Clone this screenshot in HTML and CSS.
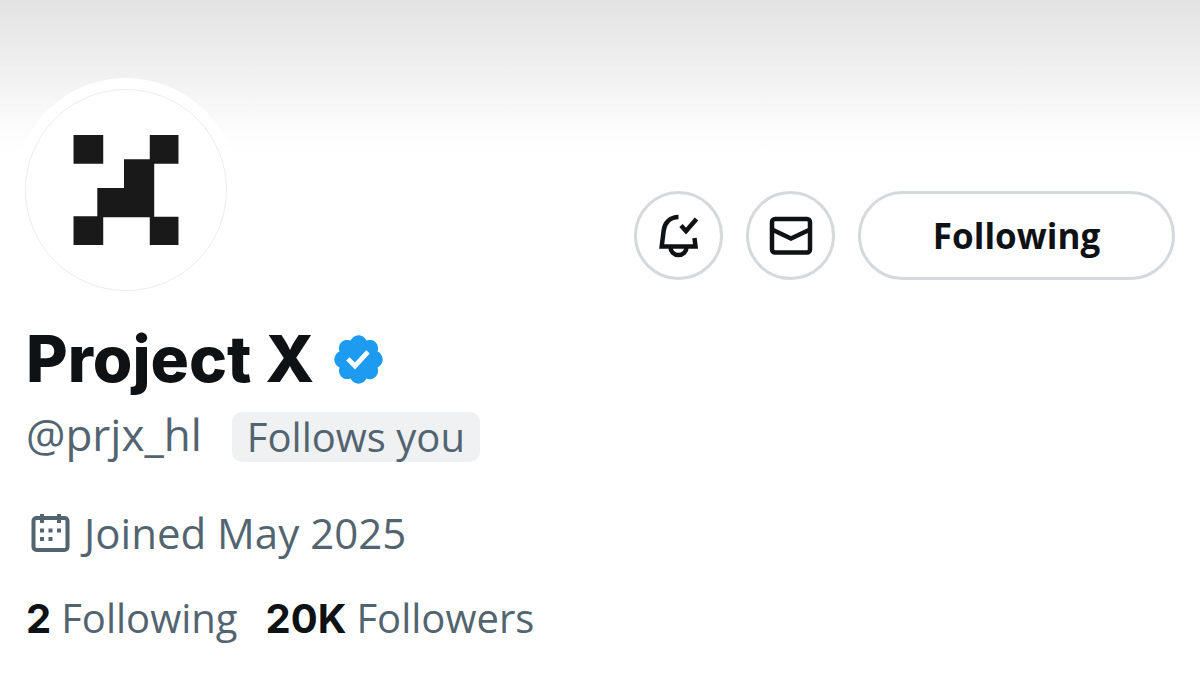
FILE: index.html
```html
<!DOCTYPE html>
<html lang="en">
<head>
<meta charset="utf-8">
<title>Project X (@prjx_hl)</title>
<link rel="stylesheet" href="styles.css">
</head>
<body>
<main class="profile">
  <header class="top">
    <div class="avatar">
      <svg class="avatar-logo" viewBox="0 0 202 202" role="img" aria-label="Project X logo">
        <path fill="#191919" d="M48 45.500h30v29h-30zM125 45.500h29v29h-24.500v53.500h24.500v28.500h-29v-28h-47v28h-30v-29h24v-28.500h27v-29h26z"/>
      </svg>
    </div>
    <div class="actions">
      <button class="btn btn-round" type="button" aria-label="Notifications">
        <svg class="btn-icon" viewBox="0 0 50 50" fill="none" stroke="#0f1214" stroke-width="4.500">
          <path d="M24.500 6C16 6 10.500 12 9.700 19.500L7.700 35.500H41.500L40.500 27"/>
          <path d="M16.500 36.500a8 7.500 0 0 0 16 0"/>
          <path d="M27 14.500L32 20L42.500 8"/>
        </svg>
      </button>
      <button class="btn btn-round" type="button" aria-label="Message">
        <svg class="btn-icon" viewBox="0 0 50 50" fill="none" stroke="#0f1214" stroke-width="4.500">
          <rect x="6" y="8" width="38" height="33.500" rx="3"/>
          <path d="M7 19L25 27.500L43 19"/>
        </svg>
      </button>
      <button class="btn btn-following" type="button">Following</button>
    </div>
  </header>

  <div class="name-row">
    <h1 class="name">Project X</h1>
    <svg class="verified" viewBox="1.500 1.500 19 19" role="img" aria-label="Verified account">
      <path fill="#1d9bf0" d="M20.396 11c-.018-.646-.215-1.275-.57-1.816-.354-.54-.852-.972-1.438-1.246.223-.607.27-1.264.14-1.897-.131-.634-.437-1.218-.882-1.687-.47-.445-1.053-.75-1.687-.882-.633-.13-1.29-.083-1.897.14-.273-.587-.704-1.086-1.245-1.44S11.647 1.62 11 1.604c-.646.017-1.273.213-1.813.568s-.969.854-1.24 1.44c-.608-.223-1.267-.272-1.902-.14-.635.13-1.22.436-1.69.882-.445.47-.749 1.055-.878 1.688-.13.633-.08 1.29.144 1.896-.587.274-1.087.705-1.443 1.245-.356.54-.555 1.17-.574 1.817.02.647.218 1.276.574 1.817.356.54.856.972 1.443 1.245-.224.606-.274 1.263-.144 1.896.13.634.433 1.218.877 1.688.47.443 1.054.747 1.687.878.633.132 1.29.084 1.897-.136.274.586.705 1.084 1.246 1.439.54.354 1.17.551 1.816.569.647-.016 1.276-.213 1.817-.567s.972-.854 1.245-1.44c.604.239 1.266.296 1.903.164.636-.132 1.22-.447 1.68-.907.46-.46.776-1.044.908-1.681s.075-1.299-.165-1.903c.586-.274 1.084-.705 1.439-1.246.354-.54.551-1.17.569-1.816zM9.662 14.850l-3.429-3.428 1.293-1.302 2.072 2.072 4.400-4.794 1.347 1.246z"/>
    </svg>
  </div>

  <div class="handle-row">
    <span class="handle">@prjx_hl</span>
    <span class="tag">Follows you</span>
  </div>

  <div class="joined">
    <svg class="calendar" viewBox="0 0 40 40" aria-hidden="true">
      <rect x="3.500" y="5" width="34" height="32" rx="3" fill="none" stroke="#536471" stroke-width="4"/>
      <path fill="#536471" d="M10 1h4v9h-4zM27 1h4v9h-4zM10 15.500h4v4h-4zM18.500 15.500h4v4h-4zM27 15.500h4v4h-4zM10 24h4v4h-4zM18.500 24h4v4h-4z"/>
    </svg>
    <span>Joined May 2025</span>
  </div>

  <nav class="stats">
    <a class="stat" href="#following"><strong>2</strong> <span>Following</span></a>
    <a class="stat" href="#followers"><strong>20K</strong> <span>Followers</span></a>
  </nav>
</main>
</body>
</html>
```
FILE: styles.css
```css
* {
  box-sizing: border-box;
}

body {
  margin: 0;
  background: #fff;
  color: #0f1214;
  font-family: "Open Sans", "Noto Sans", sans-serif;
  font-size: 40px;
  line-height: 52px;
}

.profile {
  min-height: 100vh;
  padding: 78px 25px 32px 26px;
  background: linear-gradient(#e3e3e3 0, #eee 60px, #fcfcfc 130px, #fff 155px);
}

.top {
  display: flex;
  justify-content: space-between;
  align-items: flex-end;
}

.avatar {
  margin-left: -12px;
  padding: 11px;
  border-radius: 50%;
  background: #fff;
}

.avatar-logo {
  display: block;
  width: 202px;
  height: 202px;
  border: 1px solid #ececec;
  border-radius: 50%;
}

.actions {
  display: flex;
  gap: 23px;
  padding-bottom: 22px;
}

.btn {
  display: flex;
  align-items: center;
  justify-content: center;
  height: 89px;
  padding: 0;
  border: 3px solid #d5d9dd;
  border-radius: 45px;
  background: #fff;
  color: #0f1214;
  font: inherit;
}

.btn-round {
  width: 89px;
}

.btn-following {
  width: 317px;
  font-size: 35px;
  font-weight: 700;
}

.btn-icon {
  width: 50px;
  height: 50px;
}

.name-row {
  display: flex;
  align-items: center;
  gap: 20px;
  margin-top: 17px;
}

.name {
  margin: 0;
  font-family: Inter, "Open Sans", sans-serif;
  font-size: 64px;
  font-weight: 800;
  line-height: 80px;
}

.verified {
  width: 49px;
  height: 49px;
}

.handle-row {
  display: flex;
  align-items: flex-start;
  gap: 30px;
  margin-top: 13px;
  color: #536471;
}

.handle {
  font-size: 44px;
  line-height: 44px;
}

.tag {
  padding: 0 15px;
  border-radius: 10px;
  background: #eff1f2;
  line-height: 50px;
}

.joined {
  display: flex;
  align-items: center;
  gap: 14px;
  margin-top: 45px;
  padding-left: 4px;
  color: #536471;
  font-size: 42px;
}

.calendar {
  width: 40px;
  height: 40px;
}

.stats {
  display: flex;
  gap: 28px;
  margin-top: 33px;
}

.stat {
  display: flex;
  align-items: baseline;
  gap: 10px;
  color: #536471;
  text-decoration: none;
}

.stat strong {
  color: #0f1214;
  font-family: Inter, "Open Sans", sans-serif;
  font-weight: 700;
}
```
